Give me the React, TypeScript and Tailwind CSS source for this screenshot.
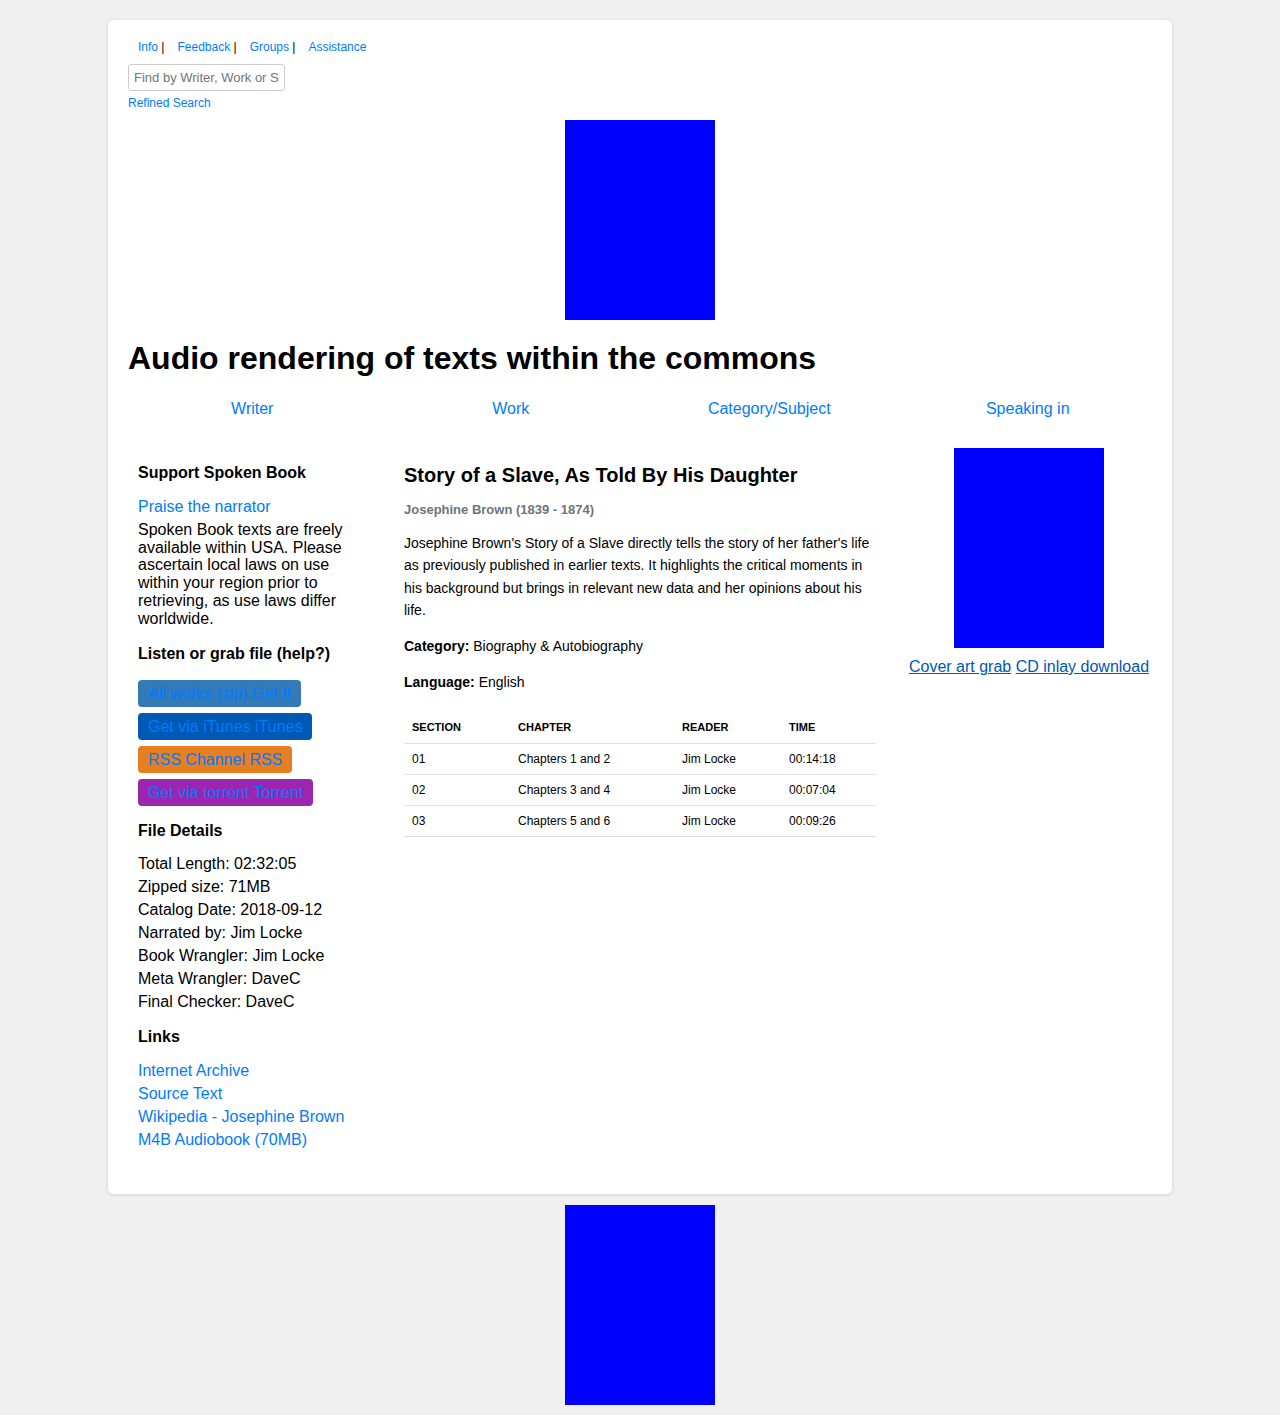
import React from "react";

const font = "font-['Liberation_Sans',Arial,Helvetica,sans-serif]";

const topLinks = ["Info", "Feedback", "Groups", "Assistance"];
const browse = ["Writer", "Work", "Category/Subject", "Speaking in"];

const grabButtons = [
  { label: "All works (zip) Get It", bg: "bg-[#337ab7]" },
  { label: "Get via iTunes iTunes", bg: "bg-[#0059b3]" },
  { label: "RSS Channel RSS", bg: "bg-[#e67e22]" },
  { label: "Get via torrent Torrent", bg: "bg-[#9b27b0]" },
];

const details = [
  "Total Length: 02:32:05",
  "Zipped size: 71MB",
  "Catalog Date: 2018-09-12",
  "Narrated by: Jim Locke",
  "Book Wrangler: Jim Locke",
  "Meta Wrangler: DaveC",
  "Final Checker: DaveC",
];

const links = [
  "Internet Archive",
  "Source Text",
  "Wikipedia - Josephine Brown",
  "M4B Audiobook (70MB)",
];

const sections = [
  { section: "01", chapter: "Chapters 1 and 2", reader: "Jim Locke", time: "00:14:18" },
  { section: "02", chapter: "Chapters 3 and 4", reader: "Jim Locke", time: "00:07:04" },
  { section: "03", chapter: "Chapters 5 and 6", reader: "Jim Locke", time: "00:09:26" },
];

function SideHeading({ children, className = "" }: { children: React.ReactNode; className?: string }) {
  return <h3 className={`text-[16px] font-bold leading-[18px] text-black ${className}`}>{children}</h3>;
}

export default function App() {
  return (
    <div className={`${font} min-h-screen bg-[#f0f0f0] pt-5 pb-[10px] text-[#111]`}>
      <div className="mx-auto w-[1064px] rounded-md bg-white px-5 pt-[20px] pb-[43px] shadow-[0_1px_4px_rgba(0,0,0,0.12)]">
        {/* top links */}
        <div className="ml-[10px] flex gap-[13px] text-[12px] leading-[14px]">
          {topLinks.map((l, i) => (
            <span key={l}>
              <a href="#" className="text-[#007bff]">{l}</a>
              {i < topLinks.length - 1 && <span className="text-black"> |</span>}
            </span>
          ))}
        </div>

        <input
          type="text"
          placeholder="Find by Writer, Work or Subject"
          className="mt-[10px] block h-[27px] w-[157px] rounded-[3px] border border-[#ccc] px-[5px] text-[13px] text-[#333] placeholder:text-[#757575] outline-none"
        />
        <a href="#" className="mt-[5px] block text-[12px] leading-[14px] text-[#007bff]">Refined Search</a>

        <div className="mx-auto mt-[10px] h-[200px] w-[150px] bg-[#0000ff]" />

        <h1 className="mt-[20px] text-[32px] font-bold leading-[37px] text-black">
          Audio rendering of texts within the commons
        </h1>

        <div className="mt-[23px] ml-[-5px] grid w-[1034px] grid-cols-4 text-center text-[16px] leading-[18px]">
          {browse.map((b) => (
            <a key={b} href="#" className="text-[#007bff]">{b}</a>
          ))}
        </div>

        {/* three columns */}
        <div className="mt-[30px] mr-[-10px] flex">
          {/* left */}
          <div className="w-[256px] shrink-0 px-[10px] pt-[16px]">
            <SideHeading>Support Spoken Book</SideHeading>
            <a href="#" className="mt-[13px] block text-[16px] leading-[23px] text-[#007bff]">Praise the narrator</a>
            <p className="mt-[3px] text-[16px] leading-[17.7px] text-black">
              Spoken Book texts are freely available within USA. Please ascertain local laws on use within your region prior to retrieving, as use laws differ worldwide.
            </p>

            <SideHeading className="mt-[18px]">Listen or grab file (help?)</SideHeading>
            <div className="mt-[17px] flex flex-col items-start gap-[6px]">
              {grabButtons.map((b) => (
                <a
                  key={b.label}
                  href="#"
                  className={`${b.bg} rounded-[4px] px-[10px] py-[4px] text-[16px] leading-[19px] text-[#007bff]`}
                >
                  {b.label}
                </a>
              ))}
            </div>

            <SideHeading className="mt-[16px]">File Details</SideHeading>
            <div className="mt-[12px] text-[16px] leading-[23px] text-black">
              {details.map((d) => (
                <div key={d}>{d}</div>
              ))}
            </div>

            <SideHeading className="mt-[15px]">Links</SideHeading>
            <div className="mt-[13px] text-[16px] leading-[23px]">
              {links.map((l) => (
                <a key={l} href="#" className="block text-[#007bff]">{l}</a>
              ))}
            </div>
          </div>

          {/* middle */}
          <div className="w-[512px] shrink-0 px-[20px] pt-[16px]">
            <h2 className="text-[20px] font-bold leading-[23px] text-black">
              Story of a Slave, As Told By His Daughter
            </h2>
            <p className="mt-[15px] text-[13px] font-bold leading-[15px] text-[#6c757d]">
              Josephine Brown (1839 - 1874)
            </p>
            <p className="mt-[15px] text-[14px] leading-[22.4px] text-black">
              Josephine Brown's Story of a Slave directly tells the story of her father's life as previously published in earlier texts. It highlights the critical moments in his background but brings in relevant new data and her opinions about his life.
            </p>
            <p className="mt-[13px] text-[14px] leading-[22.4px] text-black">
              <span className="font-bold">Category:</span> Biography &amp; Autobiography
            </p>
            <p className="mt-[14px] text-[14px] leading-[22.4px] text-black">
              <span className="font-bold">Language:</span> English
            </p>

            <table className="mt-[19px] w-full border-collapse text-left text-[12px] text-black">
              <thead>
                <tr className="border-b border-[#dee2e6]">
                  <th className="h-[31px] w-[106px] px-[8px] text-[11px] font-bold">SECTION</th>
                  <th className="h-[31px] w-[164px] px-[8px] text-[11px] font-bold">CHAPTER</th>
                  <th className="h-[31px] w-[107px] px-[8px] text-[11px] font-bold">READER</th>
                  <th className="h-[31px] px-[8px] text-[11px] font-bold">TIME</th>
                </tr>
              </thead>
              <tbody>
                {sections.map((s) => (
                  <tr key={s.section} className="border-b border-[#dee2e6]">
                    <td className="h-[31px] px-[8px]">{s.section}</td>
                    <td className="h-[31px] px-[8px]">{s.chapter}</td>
                    <td className="h-[31px] px-[8px]">{s.reader}</td>
                    <td className="h-[31px] px-[8px]">{s.time}</td>
                  </tr>
                ))}
              </tbody>
            </table>
          </div>

          {/* right */}
          <div className="flex flex-1 flex-col items-center">
            <div className="h-[200px] w-[150px] bg-[#0000ff]" />
            <div className="mt-[10px] text-[16px] leading-[18px] whitespace-nowrap">
              <a href="#" className="text-[#0056b3] underline">Cover art grab</a>{" "}
              <a href="#" className="text-[#0056b3] underline">CD inlay download</a>
            </div>
          </div>
        </div>
      </div>

      <div className="mx-auto mt-[11px] h-[200px] w-[150px] bg-[#0000ff]" />
    </div>
  );
}
